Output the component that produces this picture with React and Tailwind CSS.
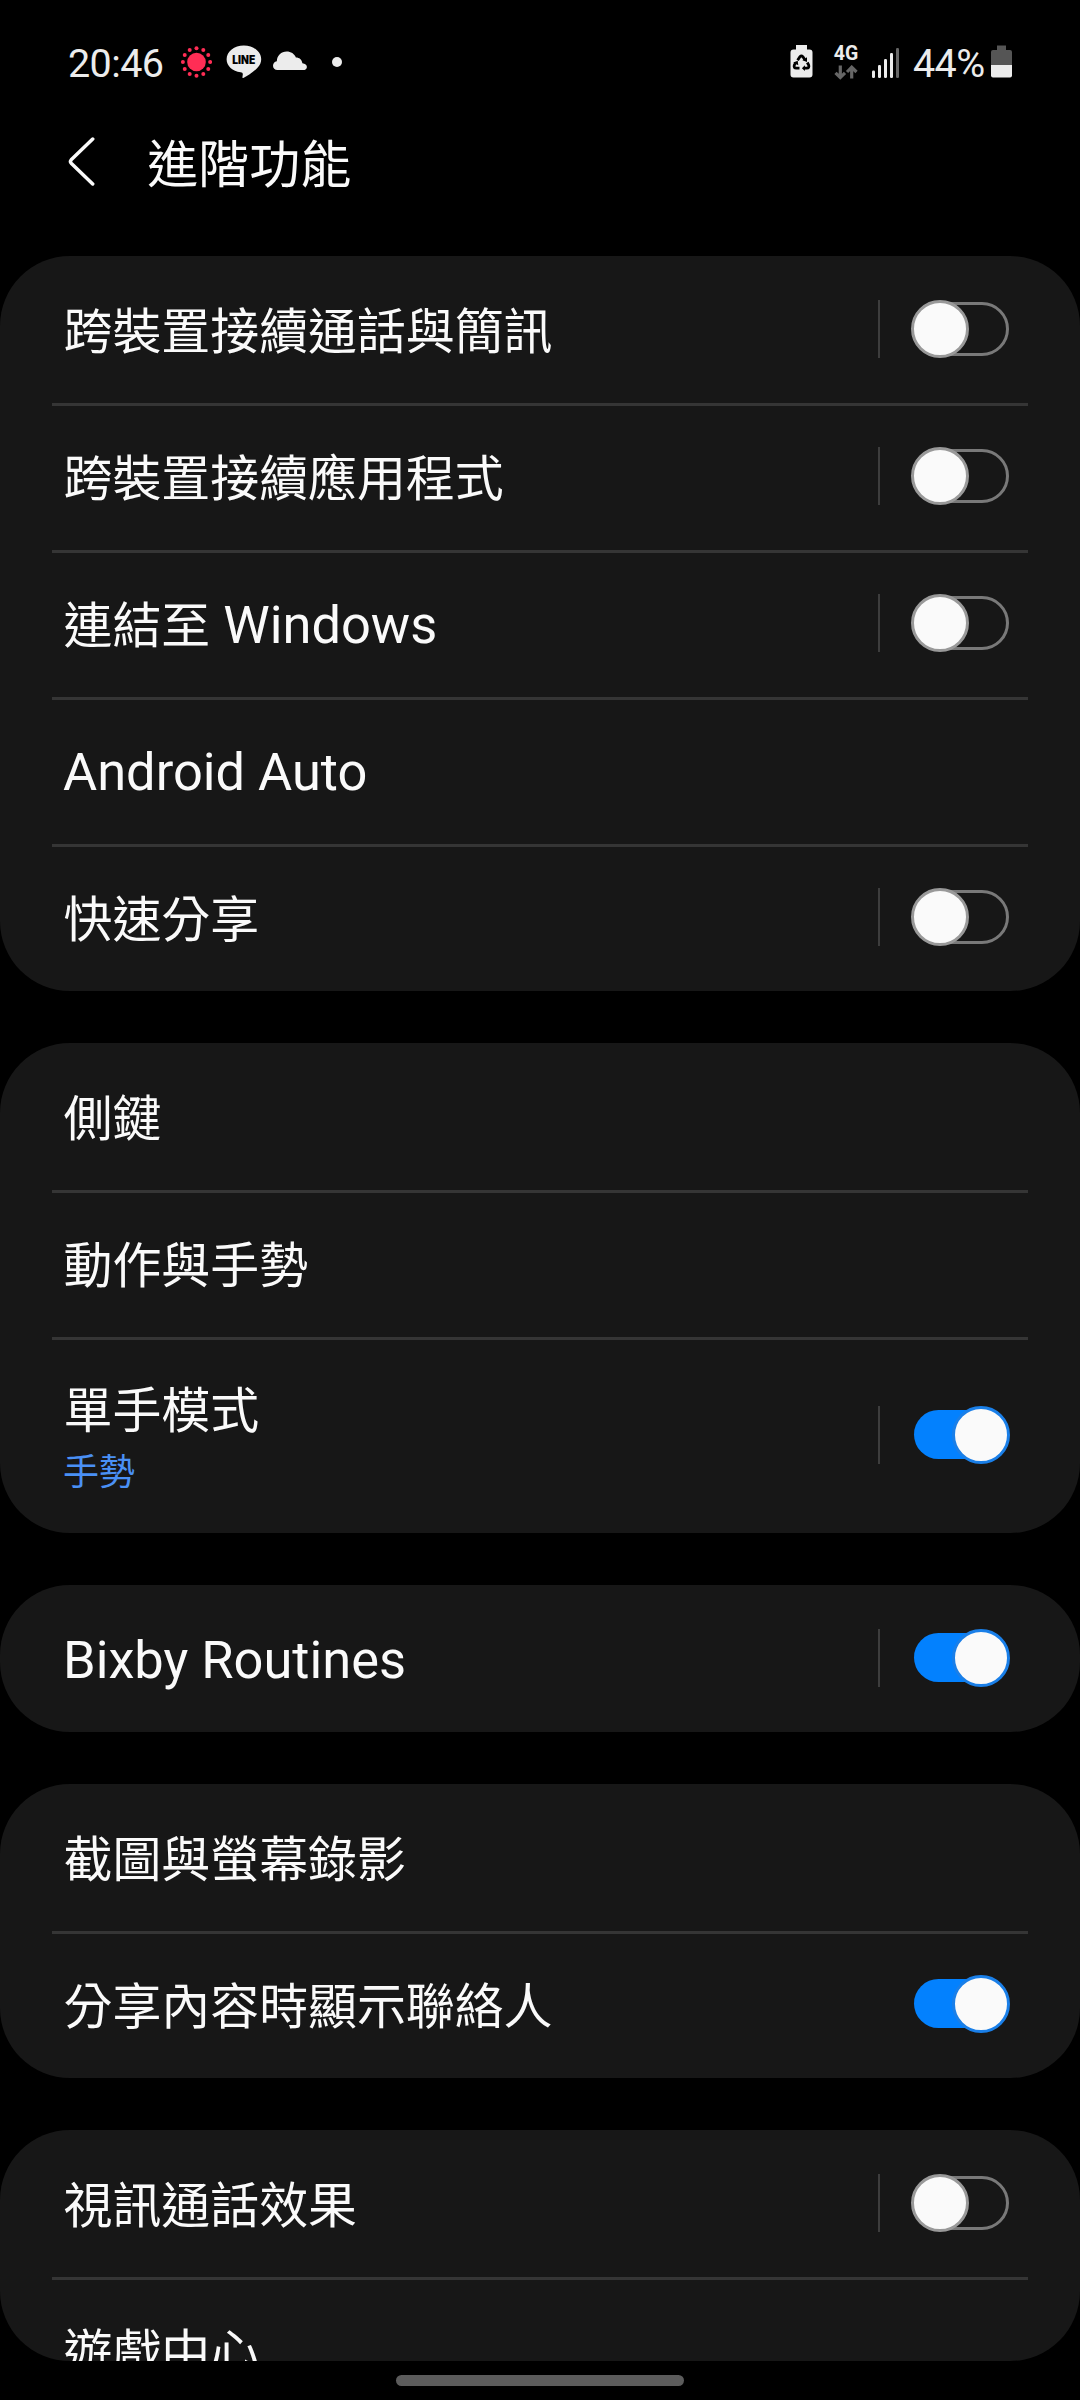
import React from "react";

const cjk = "font-['Noto_Sans_CJK_TC',sans-serif]";
const latin = "font-['Roboto','Noto_Sans_CJK_TC',sans-serif]";

const groups = [
  [
    { zh: "跨裝置接續通話與簡訊", toggle: "off", bar: true },
    { zh: "跨裝置接續應用程式", toggle: "off", bar: true },
    { zh: "連結至", en: "Windows", toggle: "off", bar: true },
    { en: "Android Auto" },
    { zh: "快速分享", toggle: "off", bar: true },
  ],
  [
    { zh: "側鍵" },
    { zh: "動作與手勢" },
    { zh: "單手模式", sub: "手勢", toggle: "on", bar: true },
  ],
  [{ en: "Bixby Routines", toggle: "on", bar: true }],
  [{ zh: "截圖與螢幕錄影" }, { zh: "分享內容時顯示聯絡人", toggle: "on" }],
  [{ zh: "視訊通話效果", toggle: "off", bar: true }, { zh: "遊戲中心" }],
];

function Toggle({ state }) {
  if (state === "on") {
    return (
      <div className="relative h-[58px] w-[99px] shrink-0">
        <div className="absolute left-[3px] top-[4px] h-[49px] w-[92px] rounded-full bg-[#0381fe]" />
        <div className="absolute right-0 top-0 size-[58px] rounded-full border-[3px] border-[#1a7fe8] bg-[#fafafa]" />
      </div>
    );
  }
  return (
    <div className="relative h-[58px] w-[99px] shrink-0">
      <div className="absolute left-[3px] top-[2px] h-[54px] w-[95px] rounded-full border-[3px] border-[#797979]" />
      <div className="absolute left-0 top-0 size-[58px] rounded-full border-[3px] border-[#999999] bg-[#fafafa]" />
    </div>
  );
}

function labelPadding(item) {
  if (item.sub) return "flex flex-1 flex-col pt-[4px]";
  if (item.zh && item.en) return "flex flex-1 flex-col";
  if (item.zh) return "flex flex-1 flex-col pb-[2px]";
  return "flex flex-1 flex-col pt-[4px]";
}

function Row({ item, first }) {
  return (
    <div className={item.sub ? "h-[196px] shrink-0" : "h-[147px] shrink-0 pb-px"}>
      <div className={first ? "h-0" : "mx-[52px] -mb-[3px] h-[3px] bg-[#353535]"} />
      <div className="flex h-full items-center pl-[63px] pr-[70px]">
        <div className={labelPadding(item)}>
          <div className="flex items-baseline whitespace-pre text-[#fafafa]">
            {item.zh && <span className={`${cjk} ml-[0.6px] text-[48.9px] leading-[60px]`}>{item.zh}</span>}
            {item.zh && item.en && <span className={`${latin} text-[52.4px] leading-[60px]`}> </span>}
            {item.en && <span className={`${latin} text-[52.4px] leading-[60px]`}>{item.en}</span>}
          </div>
          {item.sub && <div className={`${cjk} mt-[4px] text-[36px] leading-[56px] text-[#4a90f5]`}>{item.sub}</div>}
        </div>
        {item.bar && <div className="mr-[31px] h-[58px] w-[2px] bg-[#3d3d3d]" />}
        {item.toggle && <Toggle state={item.toggle} />}
      </div>
    </div>
  );
}

function LiveIcon() {
  const dots = Array.from({ length: 12 }, (_, i) => (i * Math.PI) / 6);
  return (
    <svg width="32" height="32" viewBox="0 0 32 32" fill="#ff2d55">
      <circle cx="16.500" cy="16" r="9.3" />
      {dots.map((a) => (
        <circle key={a} cx={16.5 + 13.6 * Math.cos(a)} cy={16 + 13.8 * Math.sin(a)} r="2" />
      ))}
    </svg>
  );
}

function LineIcon() {
  return (
    <svg width="36" height="34" viewBox="0 0 36 34">
      <path
        d="M17.800.5C8.300.5.6 6.600.6 14.200c0 6.800 6 12 14 13.100 1.600.3 2.400.8 2.200 2.300l-.4 2.800c-.1.600.3.800.9.500C21.800 30.800 27.500 27 31.500 22.800c2.500-2.700 3.700-5.400 3.700-8.600C35.200 6.600 27.500.5 17.800.5z"
        fill="#ececec"
      />
      <text x="17.700" y="19.300" textAnchor="middle" fontFamily="Inter, sans-serif" fontWeight="900" fontSize="11.300" textLength="23" lengthAdjust="spacingAndGlyphs" fill="#000">
        LINE
      </text>
    </svg>
  );
}

function CloudIcon() {
  return (
    <svg width="34" height="20" viewBox="0 0 34 20" fill="#ececec" className="-mt-[2px]">
      <path d="M4.500 19C1.800 19 0 17.200 0 14.700c0-2.300 1.500-4 3.800-4.500C4 4.500 8.200.5 13.700.5c4.200 0 7.600 2.200 9.200 5.900 3.500 0 5.900 2.100 6.500 5.800 2.700.3 4.500 1.700 4.500 3.700 0 1.900-1.500 3.100-3.900 3.100z" />
    </svg>
  );
}

function EcoBatteryIcon() {
  return (
    <svg width="23" height="33" viewBox="0 0 23 33" className="-mt-px">
      <path d="M6 0h11v4.500h2.500A3 3 0 0 1 22.500 7.500v22a3 3 0 0 1-3 3h-16a3 3 0 0 1-3-3v-22a3 3 0 0 1 3-3H6z" fill="#ececec" />
      <g fill="none" stroke="#000" strokeWidth="2.800" strokeLinejoin="round">
        <path d="M7.600 15.300l2.300-3.600q1.500-1.400 3 0l1.800 2.900" />
        <path d="M17.300 17.500l1.400 2.700q.8 2.800-2 3h-2.500" />
        <path d="M9.500 23.200H6.300q-2.800-.2-2-3l1.200-2.200" />
      </g>
      <path d="M17 12.300v4.800l-4.600-1.900zM14.900 20.300v5.700l-3-2.800zM3.200 17.400l4.500-1.700.6 4.500z" fill="#000" />
    </svg>
  );
}

function NetworkIcon() {
  return (
    <div className="flex w-[26px] flex-col items-center pt-px">
      <span className="font-['Roboto',sans-serif] text-[19.5px] font-bold leading-[18px] text-[#ececec]">4G</span>
      <svg width="24" height="15" viewBox="0 0 24 15" fill="none" stroke="#666" strokeWidth="3.200" className="mt-[2px]">
        <path d="M6.300 0.500v12M1.500 7.800l4.800 4.800L11 7.800M17.700 13.500v-11M13 7l4.700-4.800L22.500 7" />
      </svg>
    </div>
  );
}

function SignalIcon() {
  return (
    <svg width="28" height="31" viewBox="0 0 28 31" fill="#ececec">
      <rect x="0" y="23.500" width="3" height="7.500" rx="1.200" />
      <rect x="6" y="18" width="3" height="13" rx="1.200" />
      <rect x="12" y="12" width="3" height="19" rx="1.200" />
      <rect x="18" y="6" width="3" height="25" rx="1.200" />
      <rect x="24" y="1" width="3" height="30" rx="1.200" fill="#666" />
    </svg>
  );
}

function BatteryIcon() {
  return (
    <svg width="21" height="33" viewBox="0 0 21 33" className="-mt-px">
      <path d="M6 0.500h9V5h4a2 2 0 0 1 2 2v13H0V7a2 2 0 0 1 2-2h4z" fill="#555" />
      <path d="M0 20h21v10.500a2 2 0 0 1-2 2H2a2 2 0 0 1-2-2z" fill="#ececec" />
    </svg>
  );
}

export default function App() {
  return (
    <div className="flex h-[2400px] w-[1080px] flex-col overflow-hidden bg-black">
      <header className="flex h-[256px] shrink-0 flex-col">
        <div className="flex h-[124px] items-center px-[68px]">
          <span className="w-[112px] whitespace-nowrap pt-[4px] font-['Roboto',sans-serif] text-[39.5px] tracking-[-0.6px] leading-[48px] text-[#ececec]">20:46</span>
          <span className="w-[46px]"><LiveIcon /></span>
          <span className="w-[47px]"><LineIcon /></span>
          <span className="w-[59px]"><CloudIcon /></span>
          <span className="-mt-px size-[10px] rounded-full bg-[#ececec]" />
          <div className="ml-auto flex items-center">
            <span className="mr-[20px]"><EcoBatteryIcon /></span>
            <span className="mr-[13px]"><NetworkIcon /></span>
            <span className="mr-[13px]"><SignalIcon /></span>
            <span className="w-[78px] whitespace-nowrap pt-[4px] font-['Roboto',sans-serif] text-[39.5px] tracking-[-0.6px] leading-[48px] text-[#ececec]">44%</span>
            <BatteryIcon />
          </div>
        </div>
        <div className="flex h-[76px] items-center pl-[68px]">
          <svg width="28" height="50" viewBox="0 0 28 50" fill="none" stroke="#fafafa" strokeWidth="3.500" strokeLinecap="round" strokeLinejoin="round">
            <path d="M24.700 2L3.200 22.800q-1.500 1.700 0 3.400L24.700 47" />
          </svg>
          <h1 className={`${cjk} ml-[51.3px] pb-[3px] text-[51px] leading-[60px] text-[#fafafa]`}>進階功能</h1>
        </div>
      </header>
      <main className="flex min-h-0 flex-1 flex-col gap-[52px]">
        {groups.map((rows, g) => (
          <section
            key={g}
            className={
              g === groups.length - 1
                ? "flex min-h-0 flex-1 flex-col overflow-hidden rounded-[70px] bg-[#171717]"
                : "flex shrink-0 flex-col overflow-hidden rounded-[70px] bg-[#171717]"
            }
          >
            {rows.map((item, i) => (
              <Row key={i} item={item} first={i === 0} />
            ))}
          </section>
        ))}
      </main>
      <footer className="flex h-[39px] shrink-0 justify-center pt-[14px]">
        <div className="h-[11px] w-[288px] rounded-full bg-[#5c5c5c]" />
      </footer>
    </div>
  );
}
